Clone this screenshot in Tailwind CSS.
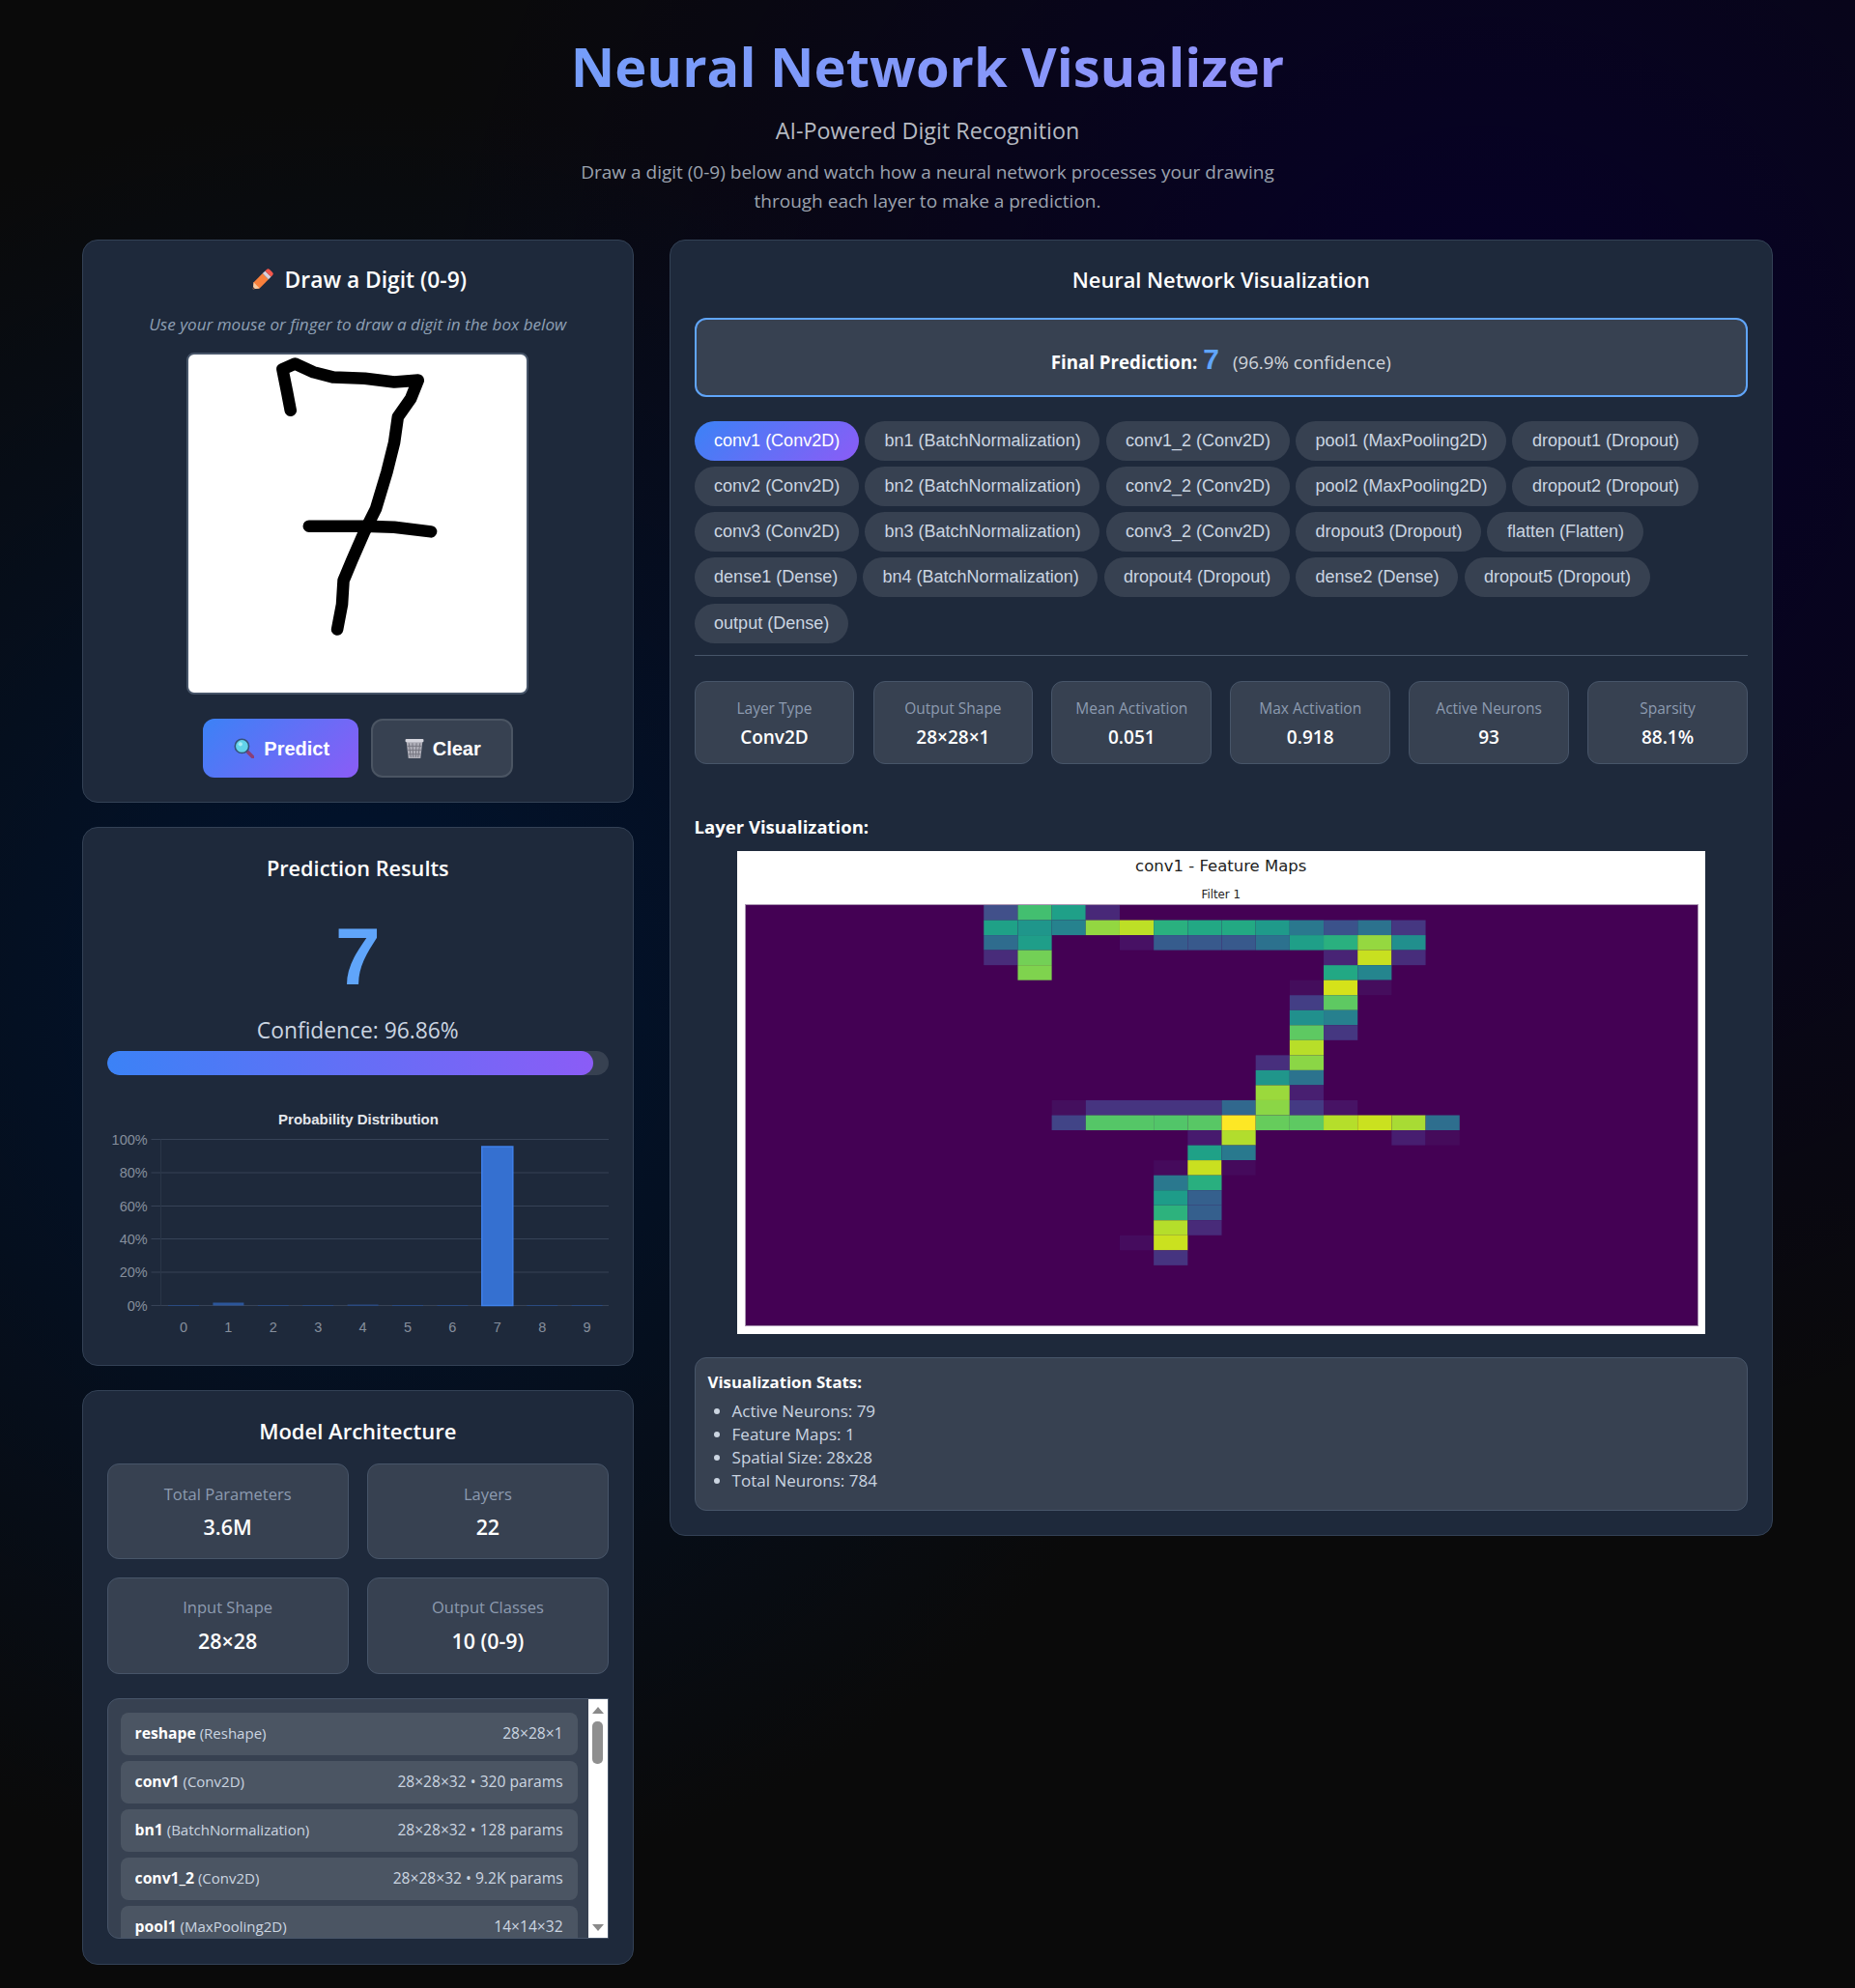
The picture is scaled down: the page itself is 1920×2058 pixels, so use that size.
<!DOCTYPE html>
<html lang="en"><head><meta charset="utf-8"><title>Neural Network Visualizer</title>
<script src="https://cdn.jsdelivr.net/npm/@tailwindcss/browser@4"></script></head>
<body class="bg-[#0a0a0a]">
<div class="h-[2058px] overflow-hidden font-['Open_Sans',sans-serif] text-white bg-[radial-gradient(circle_at_20%_50%,#001432_0%,transparent_50%),radial-gradient(circle_at_80%_20%,#06002a_0%,transparent_50%)]">
<div class="w-[1750px] mx-auto">
  <header class="text-center h-[247.5px] pt-[30px]">
    <h1 class="text-[56px] leading-[76px] font-bold bg-[linear-gradient(135deg,#60a5fa,#a78bfa)] bg-clip-text text-transparent">Neural Network Visualizer</h1>
    <p class="mt-[13px] text-[23.3px] leading-[32px] text-[#b6bac2]">AI-Powered Digit Recognition</p>
    <p class="mt-[12px] mx-auto w-[800px] text-[19px] leading-[30px] text-[#9ca3af]">Draw a digit (0-9) below and watch how a neural network processes your drawing<br>through each layer to make a prediction.</p>
  </header>
  <div class="grid grid-cols-[570.5px_1141.5px] gap-x-[37.5px] items-start">
    <div class="flex flex-col gap-[25.6px]">
      <section class="h-[583px] rounded-2xl border border-[#334155] bg-[#1e293b] px-[24.6px] pt-[25.6px] text-center">
        <h2 class="flex items-center justify-center gap-[11px] text-[22.8px] leading-[32px] font-semibold">
          <svg width="26" height="26" viewBox="0 0 24 24"><g transform="rotate(45 12 12)"><path d="M8 7h8v12l-4 5-4-5z" fill="#f9803c"/><path d="M8 19h8l-4 5z" fill="#f7c9a0"/><path d="M10.800 22.500h2.400L12 24z" fill="#5a3a3a"/><rect x="8" y="3.500" width="8" height="3.500" fill="#d9d0da"/><path d="M8 3.500V1.500a2 2 0 0 1 2-2h4a2 2 0 0 1 2 2v2z" fill="#f4574c"/></g></svg>
          Draw a Digit (0-9)</h2>
        <p class="mt-[17.500px] text-[17.100px] leading-[24px] italic text-[#8fa0b5]">Use your mouse or finger to draw a digit in the box below</p>
        <div class="mt-[17px] mx-auto w-[354px] h-[354px] rounded-lg border-2 border-[#475569] bg-white overflow-hidden">
          <svg width="350" height="350" viewBox="300 330 920 920" fill="none" stroke="#000" stroke-width="33" stroke-linecap="round" stroke-linejoin="round">
            <path d="M578 482 568 430 556 370 590 355 640 378 695 392 780 395 860 405 925 400 905 450 870 500 860 570 840 650 810 750 780 810 745 890 722 945 718 1010 705 1078"/>
            <path d="M628 797 780 797 860 800 960 812"/>
          </svg>
        </div>
        <div class="mt-[25px] flex justify-center gap-[13px] font-['Liberation_Sans',sans-serif] text-[20px] font-bold">
          <button class="w-[161px] h-[61px] pt-[1px] pl-[3px] rounded-xl flex items-center justify-center gap-[10px] bg-[linear-gradient(135deg,#3b82f6,#8b5cf6)] text-white">
            <svg width="21" height="21" viewBox="0 0 20 20"><path d="M12 12 19 19" stroke="#8b3f78" stroke-width="3.500" stroke-linecap="round"/><circle cx="8" cy="8" r="6.800" fill="#62d3ea" stroke="#34527a" stroke-width="1.500"/><circle cx="6.500" cy="6" r="2" fill="#a8ecf7"/></svg>
            Predict</button>
          <button class="w-[147px] h-[61px] pt-[1px] pl-[1px] rounded-xl flex items-center justify-center gap-[8px] border-2 border-[#4b5563] bg-[#374151] text-white">
            <svg width="22" height="22" viewBox="0 0 21 21"><path d="M2.500 3h16l-2 17h-12z" fill="#aeaeb8"/><path d="M5 5l2 14M8.500 5l.8 14M12.500 5l-.8 14M16 5l-2 14M3.500 8h14M4 12h13M4.500 16h12" stroke="#75757f" stroke-width=".9" fill="none"/><rect x="1.500" y="1" width="18" height="3" rx="1" fill="#d6d6de"/></svg>
            Clear</button>
        </div>
      </section>

      <section class="h-[557.500px] rounded-2xl border border-[#334155] bg-[#1e293b] px-[24.6px] pt-[25.6px] text-center">
        <h2 class="text-[21.7px] leading-[32px] font-semibold">Prediction Results</h2>
        <div class="mt-[15px] text-[84px] leading-[120px] font-bold font-['Liberation_Sans',sans-serif] text-[#60a5fa]">7</div>
        <p class="mt-[1.500px] text-[22.8px] leading-[32px] text-[#cbd5e1]">Confidence: 96.86%</p>
        <div class="mt-[4.500px] h-[25px] rounded-full bg-[#374151] overflow-hidden"><div class="h-full w-[96.86%] rounded-full bg-[linear-gradient(90deg,#3b82f6,#8b5cf6)]"></div></div>
        <svg class="mt-[27px] block" width="519" height="250" viewBox="0 0 519 250" font-family="Liberation Sans, sans-serif" font-size="14.500" fill="#868f9d" text-anchor="end">
          <text x="260" y="24" text-anchor="middle" font-size="15" font-weight="700" fill="#e5e7eb">Probability Distribution</text>
          <g stroke="#374357" stroke-width="1">
            <path d="M45.500 39.500H519M45.500 74H519M45.500 108.500H519M45.500 142.500H519M45.500 177H519M45.500 211.500H519"/>
            <path d="M55.500 39.500V211.500" stroke="#2a3648"/>
          </g>
          <text x="41.700" y="44.500">100%</text><text x="41.700" y="79">80%</text><text x="41.700" y="113.500">60%</text><text x="41.700" y="147.500">40%</text><text x="41.700" y="182">20%</text><text x="41.700" y="216.500">0%</text>
          <g text-anchor="middle"><text x="79" y="238.500">0</text><text x="125.400" y="238.500">1</text><text x="171.800" y="238.500">2</text><text x="218.200" y="238.500">3</text><text x="264.600" y="238.500">4</text><text x="311" y="238.500">5</text><text x="357.400" y="238.500">6</text><text x="403.800" y="238.500">7</text><text x="450.200" y="238.500">8</text><text x="496.600" y="238.500">9</text></g>
          <rect x="387.800" y="47" width="32" height="164.500" fill="#3570d0" stroke="#3f80ea" stroke-width="1.500"/>
          <rect x="109.400" y="208.500" width="32" height="3" fill="#2c569a"/>
          <g fill="#2a4a80"><rect x="63" y="211" width="32" height="1"/><rect x="155.800" y="211" width="32" height="1"/><rect x="202.200" y="211" width="32" height="1"/><rect x="248.600" y="210.500" width="32" height="1.500"/><rect x="295" y="211" width="32" height="1"/><rect x="341.400" y="211" width="32" height="1"/><rect x="434.200" y="211" width="32" height="1"/><rect x="480.600" y="211" width="32" height="1"/></g>
        </svg>
      </section>

      <section class="h-[594.500px] rounded-2xl border border-[#334155] bg-[#1e293b] px-[24.6px] pt-[24.6px]">
        <h2 class="text-center text-[22px] leading-[32px] font-semibold">Model Architecture</h2>
        <div class="mt-[18px] grid grid-cols-2 gap-[19.200px] text-center">
          <div class="h-[99.500px] rounded-xl border border-[#475569] bg-[#374151] pt-[18px]"><div class="text-[16.500px] leading-[26px] text-[#8d9bb0]">Total Parameters</div><div class="mt-[5px] text-[21.400px] leading-[32px] font-semibold">3.6M</div></div>
          <div class="h-[99.500px] rounded-xl border border-[#475569] bg-[#374151] pt-[18px]"><div class="text-[16.500px] leading-[26px] text-[#8d9bb0]">Layers</div><div class="mt-[5px] text-[21.400px] leading-[32px] font-semibold">22</div></div>
          <div class="h-[99.500px] rounded-xl border border-[#475569] bg-[#374151] pt-[17px]"><div class="text-[16.500px] leading-[26px] text-[#8d9bb0]">Input Shape</div><div class="mt-[6px] text-[21.400px] leading-[32px] font-semibold">28×28</div></div>
          <div class="h-[99.500px] rounded-xl border border-[#475569] bg-[#374151] pt-[17px]"><div class="text-[16.500px] leading-[26px] text-[#8d9bb0]">Output Classes</div><div class="mt-[6px] text-[21.400px] leading-[32px] font-semibold">10 (0-9)</div></div>
        </div>
        <div class="relative mt-[24.600px] h-[249px] rounded-l-xl border border-[#475569] bg-[#374151] overflow-hidden">
          <div class="flex flex-col gap-[6px] pl-[13px] pt-[14px] w-[486px]">
            <div class="h-[44px] shrink-0 rounded-lg bg-[#4b5563] px-[15px] flex items-center justify-between text-[15px] text-[#cbd5e1]"><span><b class="text-[15.700px] text-white font-bold">reshape</b> (Reshape)</span><span class="text-[15.600px]">28×28×1</span></div>
            <div class="h-[44px] shrink-0 rounded-lg bg-[#4b5563] px-[15px] flex items-center justify-between text-[15px] text-[#cbd5e1]"><span><b class="text-[15.700px] text-white font-bold">conv1</b> (Conv2D)</span><span class="text-[15.600px]">28×28×32 • 320 params</span></div>
            <div class="h-[44px] shrink-0 rounded-lg bg-[#4b5563] px-[15px] flex items-center justify-between text-[15px] text-[#cbd5e1]"><span><b class="text-[15.700px] text-white font-bold">bn1</b> (BatchNormalization)</span><span class="text-[15.600px]">28×28×32 • 128 params</span></div>
            <div class="h-[44px] shrink-0 rounded-lg bg-[#4b5563] px-[15px] flex items-center justify-between text-[15px] text-[#cbd5e1]"><span><b class="text-[15.700px] text-white font-bold">conv1_2</b> (Conv2D)</span><span class="text-[15.600px]">28×28×32 • 9.2K params</span></div>
            <div class="h-[44px] shrink-0 rounded-lg bg-[#4b5563] px-[15px] flex items-center justify-between text-[15px] text-[#cbd5e1]"><span><b class="text-[15.700px] text-white font-bold">pool1</b> (MaxPooling2D)</span><span class="text-[15.600px]">14×14×32</span></div>
          </div>
          <div class="absolute top-0 right-0 bottom-0 w-[20px] bg-white">
            <div class="absolute left-[4px] top-[8px] w-0 h-0 border-x-[6px] border-x-transparent border-b-[7px] border-b-[#8a8a8a]"></div>
            <div class="absolute left-[4px] top-[23px] w-[11px] h-[44px] rounded-[5px] bg-[#8f8f8f]"></div>
            <div class="absolute left-[4px] bottom-[7px] w-0 h-0 border-x-[6px] border-x-transparent border-t-[7px] border-t-[#8a8a8a]"></div>
          </div>
        </div>
      </section>
    </div>

    <section class="h-[1342px] rounded-2xl border border-[#334155] bg-[#1e293b] px-[24.6px] pt-[25.6px]">
      <h2 class="text-center text-[21.8px] leading-[32px] font-semibold">Neural Network Visualization</h2>
      <div class="mt-[23.400px] h-[81.400px] rounded-xl border-2 border-[#60a5fa] bg-[#374151] pt-[27px] flex justify-center items-baseline">
        <b class="text-[18.700px] leading-[28px] font-bold">Final Prediction:</b>
        <span class="ml-[6px] font-['Liberation_Sans',sans-serif] font-bold text-[30px] leading-[28px] text-[#60a5fa]">7</span>
        <span class="ml-[14px] text-[18.700px] leading-[28px] text-[#d1d5db]">(96.9% confidence)</span>
      </div>
      <div class="mt-[25px] flex flex-wrap gap-x-[6.400px] gap-y-[6px] font-['Liberation_Sans',sans-serif] text-[18px] leading-[21px] text-[#cbd5e1]">
        <button class="rounded-full pl-[20.500px] pr-[19.500px] py-[10px] text-white bg-[linear-gradient(135deg,#3b82f6,#8b5cf6)]">conv1 (Conv2D)</button>
        <button class="rounded-full pl-[20.500px] pr-[19.500px] py-[10px] bg-[#374151]">bn1 (BatchNormalization)</button>
        <button class="rounded-full pl-[20.500px] pr-[19.500px] py-[10px] bg-[#374151]">conv1_2 (Conv2D)</button>
        <button class="rounded-full pl-[20.500px] pr-[19.500px] py-[10px] bg-[#374151]">pool1 (MaxPooling2D)</button>
        <button class="rounded-full pl-[20.500px] pr-[19.500px] py-[10px] bg-[#374151]">dropout1 (Dropout)</button>
        <button class="rounded-full pl-[20.500px] pr-[19.500px] py-[10px] bg-[#374151]">conv2 (Conv2D)</button>
        <button class="rounded-full pl-[20.500px] pr-[19.500px] py-[10px] bg-[#374151]">bn2 (BatchNormalization)</button>
        <button class="rounded-full pl-[20.500px] pr-[19.500px] py-[10px] bg-[#374151]">conv2_2 (Conv2D)</button>
        <button class="rounded-full pl-[20.500px] pr-[19.500px] py-[10px] bg-[#374151]">pool2 (MaxPooling2D)</button>
        <button class="rounded-full pl-[20.500px] pr-[19.500px] py-[10px] bg-[#374151]">dropout2 (Dropout)</button>
        <button class="rounded-full pl-[20.500px] pr-[19.500px] py-[10px] bg-[#374151]">conv3 (Conv2D)</button>
        <button class="rounded-full pl-[20.500px] pr-[19.500px] py-[10px] bg-[#374151]">bn3 (BatchNormalization)</button>
        <button class="rounded-full pl-[20.500px] pr-[19.500px] py-[10px] bg-[#374151]">conv3_2 (Conv2D)</button>
        <button class="rounded-full pl-[20.500px] pr-[19.500px] py-[10px] bg-[#374151]">dropout3 (Dropout)</button>
        <button class="rounded-full pl-[20.500px] pr-[19.500px] py-[10px] bg-[#374151]">flatten (Flatten)</button>
        <button class="rounded-full pl-[20.500px] pr-[19.500px] py-[10px] bg-[#374151]">dense1 (Dense)</button>
        <button class="rounded-full pl-[20.500px] pr-[19.500px] py-[10px] bg-[#374151]">bn4 (BatchNormalization)</button>
        <button class="rounded-full pl-[20.500px] pr-[19.500px] py-[10px] bg-[#374151]">dropout4 (Dropout)</button>
        <button class="rounded-full pl-[20.500px] pr-[19.500px] py-[10px] bg-[#374151]">dense2 (Dense)</button>
        <button class="rounded-full pl-[20.500px] pr-[19.500px] py-[10px] bg-[#374151]">dropout5 (Dropout)</button>
        <button class="rounded-full mt-[1px] pl-[20.500px] pr-[19.500px] py-[10px] bg-[#374151]">output (Dense)</button>
      </div>
      <div class="mt-[12px] h-px bg-[#475569]"></div>
      <div class="mt-[26.600px] grid grid-cols-6 gap-[19.200px] text-center">
        <div class="h-[86px] rounded-xl border border-[#475569] bg-[#374151] pt-[15px]"><div class="text-[15.500px] leading-[24px] text-[#8d9bb0]">Layer Type</div><div class="mt-[4px] text-[19px] leading-[28px] font-semibold">Conv2D</div></div>
        <div class="h-[86px] rounded-xl border border-[#475569] bg-[#374151] pt-[15px]"><div class="text-[15.500px] leading-[24px] text-[#8d9bb0]">Output Shape</div><div class="mt-[4px] text-[19px] leading-[28px] font-semibold">28×28×1</div></div>
        <div class="h-[86px] rounded-xl border border-[#475569] bg-[#374151] pt-[15px]"><div class="text-[15.500px] leading-[24px] text-[#8d9bb0]">Mean Activation</div><div class="mt-[4px] text-[19px] leading-[28px] font-semibold">0.051</div></div>
        <div class="h-[86px] rounded-xl border border-[#475569] bg-[#374151] pt-[15px]"><div class="text-[15.500px] leading-[24px] text-[#8d9bb0]">Max Activation</div><div class="mt-[4px] text-[19px] leading-[28px] font-semibold">0.918</div></div>
        <div class="h-[86px] rounded-xl border border-[#475569] bg-[#374151] pt-[15px]"><div class="text-[15.500px] leading-[24px] text-[#8d9bb0]">Active Neurons</div><div class="mt-[4px] text-[19px] leading-[28px] font-semibold">93</div></div>
        <div class="h-[86px] rounded-xl border border-[#475569] bg-[#374151] pt-[15px]"><div class="text-[15.500px] leading-[24px] text-[#8d9bb0]">Sparsity</div><div class="mt-[4px] text-[19px] leading-[28px] font-semibold">88.1%</div></div>
      </div>
      <h3 class="mt-[51px] text-[18.500px] leading-[28px] font-bold">Layer Visualization:</h3>
      <div class="mt-[11px] mx-auto w-[1002.500px] h-[500px] bg-white text-center font-['DejaVu_Sans',sans-serif] text-[#222] pt-[4px]">
        <div class="text-[16.500px] leading-[24px]">conv1 - Feature Maps</div>
        <div class="mt-[9px] text-[11.800px] leading-[16px]">Filter 1</div>
        <svg class="mt-[3px] ml-[9px] block outline outline-[#a892b0]" width="985" height="435" viewBox="0 0 28 28" preserveAspectRatio="none">
          <rect width="28" height="28" fill="#440154"/>
          <g><rect x="7" y="0" width="1" height="1" fill="#41508a"/><rect x="8" y="0" width="1" height="1" fill="#43bf70"/><rect x="9" y="0" width="1" height="1" fill="#1fa088"/><rect x="10" y="0" width="1" height="1" fill="#482878"/></g>
          <g><rect x="7" y="1" width="1" height="1" fill="#1fa187"/><rect x="8" y="1" width="1" height="1" fill="#1f968b"/><rect x="9" y="1" width="1" height="1" fill="#26828e"/><rect x="10" y="1" width="1" height="1" fill="#93d741"/><rect x="11" y="1" width="1" height="1" fill="#bddf26"/><rect x="12" y="1" width="1" height="1" fill="#2ab07f"/><rect x="13" y="1" width="1" height="1" fill="#22a884"/><rect x="14" y="1" width="1" height="1" fill="#23a983"/><rect x="15" y="1" width="1" height="1" fill="#1f9a8a"/><rect x="16" y="1" width="1" height="1" fill="#2a788e"/><rect x="17" y="1" width="1" height="1" fill="#3b528b"/><rect x="18" y="1" width="1" height="1" fill="#2c728e"/><rect x="19" y="1" width="1" height="1" fill="#453781"/></g>
          <g><rect x="7" y="2" width="1" height="1" fill="#2f6c8e"/><rect x="8" y="2" width="1" height="1" fill="#1f9e89"/><rect x="11" y="2" width="1" height="1" fill="#471164"/><rect x="12" y="2" width="1" height="1" fill="#365c8d"/><rect x="13" y="2" width="1" height="1" fill="#38598c"/><rect x="14" y="2" width="1" height="1" fill="#38598c"/><rect x="15" y="2" width="1" height="1" fill="#2c718e"/><rect x="16" y="2" width="1" height="1" fill="#1f9f88"/><rect x="17" y="2" width="1" height="1" fill="#2ab07f"/><rect x="18" y="2" width="1" height="1" fill="#95d840"/><rect x="19" y="2" width="1" height="1" fill="#218f8d"/></g>
          <g><rect x="7" y="3" width="1" height="1" fill="#482c7a"/><rect x="8" y="3" width="1" height="1" fill="#73d056"/><rect x="17" y="3" width="1" height="1" fill="#482475"/><rect x="18" y="3" width="1" height="1" fill="#c8e020"/><rect x="19" y="3" width="1" height="1" fill="#472d7b"/></g>
          <g><rect x="8" y="4" width="1" height="1" fill="#7fd34e"/><rect x="17" y="4" width="1" height="1" fill="#22a884"/><rect x="18" y="4" width="1" height="1" fill="#25858e"/></g>
          <g><rect x="16" y="5" width="1" height="1" fill="#440d5c"/><rect x="17" y="5" width="1" height="1" fill="#d5e21a"/><rect x="18" y="5" width="1" height="1" fill="#450d5d"/></g>
          <g><rect x="16" y="6" width="1" height="1" fill="#433e85"/><rect x="17" y="6" width="1" height="1" fill="#5ec962"/></g>
          <g><rect x="16" y="7" width="1" height="1" fill="#21908d"/><rect x="17" y="7" width="1" height="1" fill="#27808e"/></g>
          <g><rect x="16" y="8" width="1" height="1" fill="#5ec962"/><rect x="17" y="8" width="1" height="1" fill="#453781"/></g>
          <g><rect x="16" y="9" width="1" height="1" fill="#b8de29"/></g>
          <g><rect x="15" y="10" width="1" height="1" fill="#472f7d"/><rect x="16" y="10" width="1" height="1" fill="#8bd646"/></g>
          <g><rect x="15" y="11" width="1" height="1" fill="#20968b"/><rect x="16" y="11" width="1" height="1" fill="#2c738e"/></g>
          <g><rect x="15" y="12" width="1" height="1" fill="#9bd93c"/><rect x="16" y="12" width="1" height="1" fill="#481f71"/></g>
          <g><rect x="9" y="13" width="1" height="1" fill="#440f5e"/><rect x="10" y="13" width="4" height="1" fill="#463480"/><rect x="14" y="13" width="1" height="1" fill="#31688e"/><rect x="15" y="13" width="1" height="1" fill="#8bd646"/><rect x="16" y="13" width="1" height="1" fill="#443a83"/><rect x="17" y="13" width="1" height="1" fill="#471365"/></g>
          <g><rect x="9" y="14" width="1" height="1" fill="#414487"/><rect x="10" y="14" width="2" height="1" fill="#55c667"/><rect x="12" y="14" width="1" height="1" fill="#52c569"/><rect x="13" y="14" width="1" height="1" fill="#58c765"/><rect x="14" y="14" width="1" height="1" fill="#fde725"/><rect x="15" y="14" width="1" height="1" fill="#66cc5c"/><rect x="16" y="14" width="1" height="1" fill="#5ec962"/><rect x="17" y="14" width="1" height="1" fill="#b5de2b"/><rect x="18" y="14" width="1" height="1" fill="#cae11f"/><rect x="19" y="14" width="1" height="1" fill="#a8db34"/><rect x="20" y="14" width="1" height="1" fill="#2e6e8e"/></g>
          <g><rect x="13" y="15" width="1" height="1" fill="#471a6e"/><rect x="14" y="15" width="1" height="1" fill="#b2dd2d"/><rect x="19" y="15" width="1" height="1" fill="#471e70"/><rect x="20" y="15" width="1" height="1" fill="#450b5b"/></g>
          <g><rect x="13" y="16" width="1" height="1" fill="#1fa187"/><rect x="14" y="16" width="1" height="1" fill="#29798e"/></g>
          <g><rect x="12" y="17" width="1" height="1" fill="#450a5c"/><rect x="13" y="17" width="1" height="1" fill="#c9e020"/><rect x="14" y="17" width="1" height="1" fill="#450a5c"/></g>
          <g><rect x="12" y="18" width="1" height="1" fill="#2a788e"/><rect x="13" y="18" width="1" height="1" fill="#29af7f"/></g>
          <g><rect x="12" y="19" width="1" height="1" fill="#1e9c89"/><rect x="13" y="19" width="1" height="1" fill="#35608d"/></g>
          <g><rect x="12" y="20" width="1" height="1" fill="#2db27d"/><rect x="13" y="20" width="1" height="1" fill="#355f8d"/></g>
          <g><rect x="12" y="21" width="1" height="1" fill="#b5de2b"/><rect x="13" y="21" width="1" height="1" fill="#482b79"/></g>
          <g><rect x="11" y="22" width="1" height="1" fill="#450c5e"/><rect x="12" y="22" width="1" height="1" fill="#cae11f"/></g>
          <g><rect x="12" y="23" width="1" height="1" fill="#463480"/></g>
        </svg>
      </div>
      <div class="mt-[24px] h-[158.500px] rounded-xl border border-[#475569] bg-[#374151] px-[13px] pt-[12px]">
        <div class="text-[16.800px] leading-[26px] font-bold">Visualization Stats:</div>
        <ul class="mt-[5px] list-disc pl-[25px] text-[17px] leading-[24px] text-[#cbd5e1] marker:text-[#cbd5e1]">
          <li>Active Neurons: 79</li><li>Feature Maps: 1</li><li>Spatial Size: 28x28</li><li>Total Neurons: 784</li>
        </ul>
      </div>
    </section>
  </div>
</div>
</div>
</body></html>
